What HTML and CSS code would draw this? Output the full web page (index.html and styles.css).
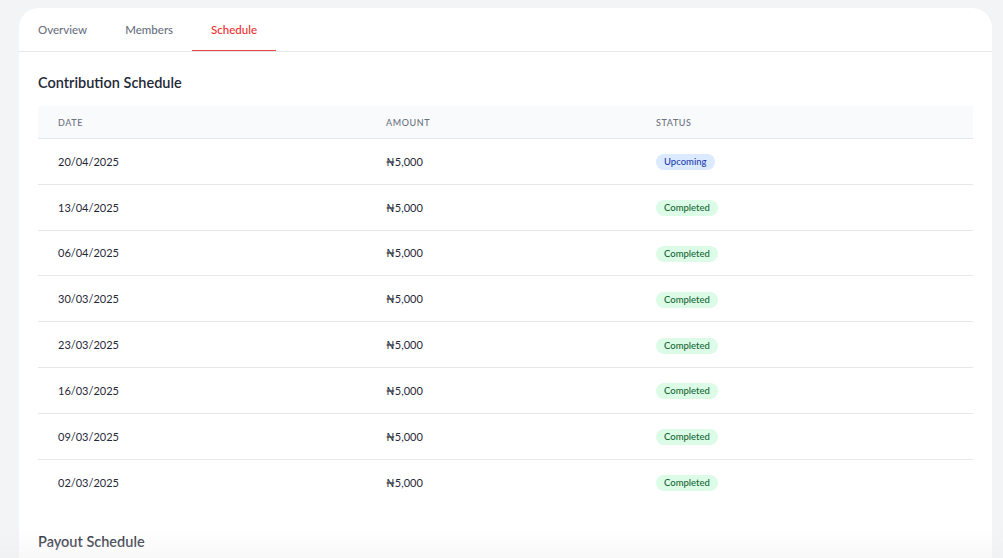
FILE: index.html
```html
<!DOCTYPE html>
<html lang="en">
<head>
<meta charset="utf-8">
<title>Schedule</title>
<link rel="stylesheet" href="styles.css">
</head>
<body>
<div class="page">
  <div class="card">
    <nav class="tabs">
      <a class="tab">Overview</a>
      <a class="tab">Members</a>
      <a class="tab active">Schedule</a>
    </nav>
    <section class="section">
      <h2 class="section-title">Contribution Schedule</h2>
      <div class="table">
        <div class="row head">
          <div class="cell">Date</div>
          <div class="cell">Amount</div>
          <div class="cell">Status</div>
        </div>
        <div class="row"><div class="cell">20/04/2025</div><div class="cell">₦5,000</div><div class="cell"><span class="badge upcoming">Upcoming</span></div></div>
        <div class="row"><div class="cell">13/04/2025</div><div class="cell">₦5,000</div><div class="cell"><span class="badge completed">Completed</span></div></div>
        <div class="row"><div class="cell">06/04/2025</div><div class="cell">₦5,000</div><div class="cell"><span class="badge completed">Completed</span></div></div>
        <div class="row"><div class="cell">30/03/2025</div><div class="cell">₦5,000</div><div class="cell"><span class="badge completed">Completed</span></div></div>
        <div class="row"><div class="cell">23/03/2025</div><div class="cell">₦5,000</div><div class="cell"><span class="badge completed">Completed</span></div></div>
        <div class="row"><div class="cell">16/03/2025</div><div class="cell">₦5,000</div><div class="cell"><span class="badge completed">Completed</span></div></div>
        <div class="row"><div class="cell">09/03/2025</div><div class="cell">₦5,000</div><div class="cell"><span class="badge completed">Completed</span></div></div>
        <div class="row last"><div class="cell">02/03/2025</div><div class="cell">₦5,000</div><div class="cell"><span class="badge completed">Completed</span></div></div>
      </div>
      <h2 class="section-title payout">Payout Schedule</h2>
    </section>
  </div>
</div>
<div class="fade"></div>
</body>
</html>
```
FILE: styles.css
```css
* { box-sizing: border-box; }
html, body { margin: 0; padding: 0; }
body {
  background: #f3f4f6;
  font-family: "Lato", "Inter", "Liberation Sans", sans-serif;
  color: #111827;
  overflow: hidden;
  height: 558px;
}
.page {
  padding: 8px 11px 0 19px;
}
.card {
  background: #ffffff;
  border-radius: 20px 20px 0 0;
  min-height: 600px;
}
.tabs {
  display: flex;
  height: 44px;
  border-bottom: 1px solid #e5e7eb;
}
.tab {
  display: flex;
  align-items: center;
  height: 43px;
  padding: 0 19px 1px 19px;
  font-size: 11.5px;
  font-weight: 500;
  color: #6b7280;
}
.tab.active {
  color: #ef2b2d;
  box-shadow: inset 0 -1px 0 #ef4444;
}
.section {
  padding: 21px 19px 0 19px;
}
.section-title {
  margin: 0;
  font-size: 14.5px;
  font-weight: 600;
  color: #1f2937;
  line-height: 20px;
}
.table {
  margin-top: 13px;
}
.row {
  display: grid;
  grid-template-columns: 328px 270px 1fr;
  height: 45.8px;
  align-items: center;
  border-bottom: 1px solid #e5e7eb;
}
.row.last { border-bottom: none; }
.row.head {
  height: 33px;
  background: #f9fafb;
}
.cell {
  padding-left: 20px;
  font-size: 11px;
  color: #1f2937;
}
.head .cell {
  font-size: 9px;
  letter-spacing: 0.6px;
  text-transform: uppercase;
  color: #6b7280;
  font-weight: 500;
}
.badge {
  display: inline-block;
  margin-top: 2px;
  padding: 2px 8px;
  border-radius: 9999px;
  font-size: 9.5px;
  font-weight: 500;
  line-height: 12px;
}
.badge.upcoming {
  background: #dbeafe;
  color: #1e40af;
}
.badge.completed {
  background: #dcfce7;
  color: #166534;
}
.payout {
  margin-top: 27px;
}
.fade {
  position: fixed;
  left: 0;
  right: 0;
  bottom: 0;
  height: 30px;
  background: linear-gradient(to bottom, rgba(240,240,240,0), rgba(240,240,240,0.45));
  pointer-events: none;
}
```
